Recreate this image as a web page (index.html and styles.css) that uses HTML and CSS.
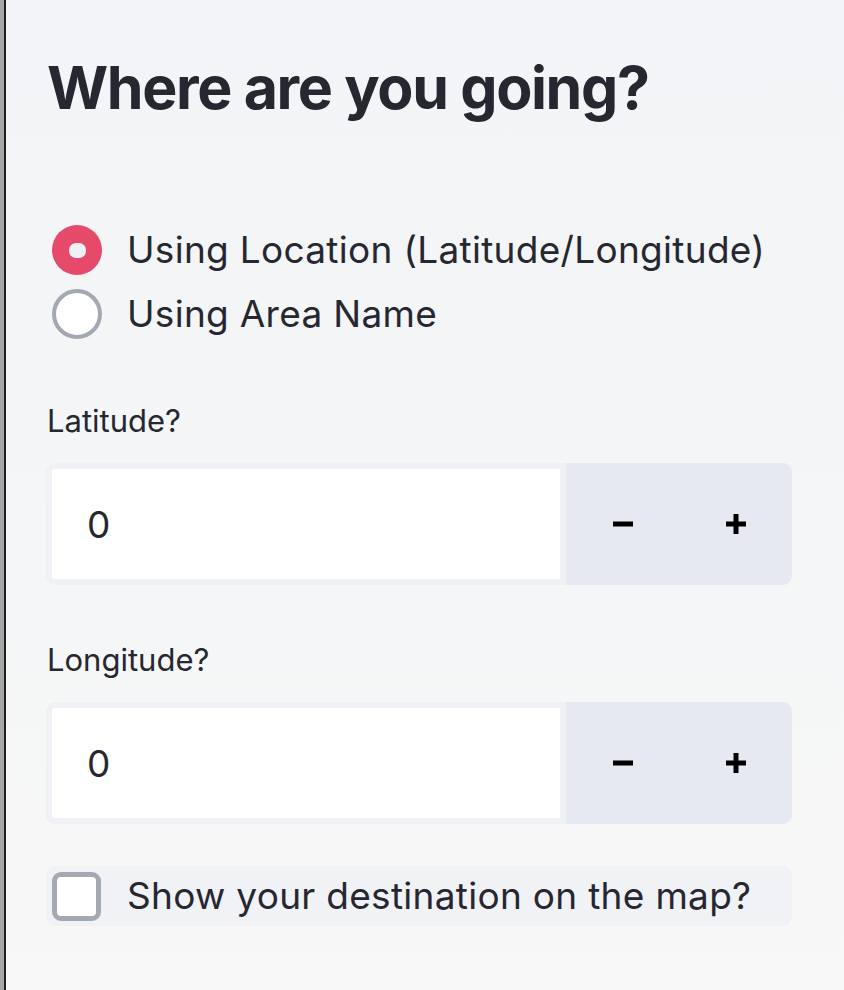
FILE: index.html
```html
<!DOCTYPE html>
<html lang="en">
<head>
<meta charset="utf-8">
<title>Where are you going?</title>
<link rel="stylesheet" href="styles.css">
</head>
<body>
<div class="window">
  <div class="edge-gray"></div>
  <div class="edge-dark"></div>
  <aside class="sidebar">
    <h1 class="title">Where are you going?</h1>

    <div class="radio-group">
      <label class="radio-row">
        <span class="radio radio-on"><span class="radio-dot"></span></span>
        <span class="radio-text">Using Location (Latitude/Longitude)</span>
      </label>
      <label class="radio-row">
        <span class="radio radio-off"></span>
        <span class="radio-text">Using Area Name</span>
      </label>
    </div>

    <div class="field">
      <div class="field-label">Latitude?</div>
      <div class="number-input">
        <div class="number-value">0</div>
        <div class="step-btn">
          <svg width="22" height="22" viewBox="0 0 22 22"><rect x="1" y="8.5" width="20" height="5" fill="#000"/></svg>
        </div>
        <div class="step-btn">
          <svg width="22" height="22" viewBox="0 0 22 22"><rect x="1" y="8.5" width="20" height="5" fill="#000"/><rect x="8.5" y="1" width="5" height="20" fill="#000"/></svg>
        </div>
      </div>
    </div>

    <div class="field">
      <div class="field-label">Longitude?</div>
      <div class="number-input">
        <div class="number-value">0</div>
        <div class="step-btn">
          <svg width="22" height="22" viewBox="0 0 22 22"><rect x="1" y="8.5" width="20" height="5" fill="#000"/></svg>
        </div>
        <div class="step-btn">
          <svg width="22" height="22" viewBox="0 0 22 22"><rect x="1" y="8.5" width="20" height="5" fill="#000"/><rect x="8.5" y="1" width="5" height="20" fill="#000"/></svg>
        </div>
      </div>
    </div>

    <label class="check-row">
      <span class="checkbox"></span>
      <span class="check-text">Show your destination on the map?</span>
    </label>
  </aside>
</div>
</body>
</html>
```

FILE: styles.css
```css
html, body {
  margin: 0;
  padding: 0;
}

body {
  font-family: "Inter", "Liberation Sans", sans-serif;
  color: #262730;
}

.window {
  display: flex;
  height: 990px;
  overflow: hidden;
}

.edge-gray {
  width: 4px;
  background: #a6a6a6;
}

.edge-dark {
  width: 2px;
  background: #1e1e1e;
}

.sidebar {
  flex: 1;
  padding: 52px 52px 0 40px;
  background: linear-gradient(to bottom, #f3f4f7 0%, #f5f6f7 60%, #f8f8f8 100%);
}

.title {
  margin: 0;
  font-size: 59px;
  line-height: 72px;
  font-weight: 700;
  letter-spacing: -1.35px;
  padding-left: 1px;
  color: #262730;
}

.radio-group {
  margin-top: 94px;
  display: flex;
  flex-direction: column;
}

.radio-row {
  display: flex;
  align-items: center;
  height: 64px;
}

.radio {
  box-sizing: border-box;
  width: 50px;
  height: 50px;
  border-radius: 50%;
  margin-left: 6px;
  margin-right: 25px;
  display: flex;
  align-items: center;
  justify-content: center;
  flex-shrink: 0;
}

.radio-on {
  background: #e64a6b;
}

.radio-dot {
  width: 17px;
  height: 15px;
  border-radius: 7px;
  background: #eef0f4;
}

.radio-off {
  background: #ffffff;
  border: 4px solid #a4a8b3;
}

.radio-text {
  font-size: 37px;
  line-height: 64px;
  letter-spacing: 0.3px;
  white-space: nowrap;
}

.field {
  margin-top: 55px;
}

.field-label {
  font-size: 31px;
  line-height: 40px;
  padding-left: 1px;
  margin-bottom: 22px;
}

.number-input {
  display: flex;
  height: 122px;
  border-radius: 9px;
  overflow: hidden;
  background: #eff1f5;
}

.number-value {
  box-sizing: border-box;
  width: 520px;
  border: 6px solid #eff1f5;
  border-radius: 9px 0 0 9px;
  background: #ffffff;
  padding-left: 35px;
  display: flex;
  align-items: center;
  font-size: 37px;
}

.step-btn {
  width: 113px;
  display: flex;
  align-items: center;
  justify-content: center;
  background: #e6e9f1;
}

.check-row {
  display: flex;
  align-items: center;
  height: 60px;
  margin-top: 42px;
  border-radius: 9px;
  background: #f0f2f6;
}

.checkbox {
  box-sizing: border-box;
  width: 49px;
  height: 49px;
  margin-left: 6px;
  margin-right: 26px;
  border: 5px solid #a4a8b3;
  border-radius: 9px;
  background: #ffffff;
  flex-shrink: 0;
}

.check-text {
  font-size: 37px;
  line-height: 60px;
  letter-spacing: 0.3px;
  white-space: nowrap;
}
```
